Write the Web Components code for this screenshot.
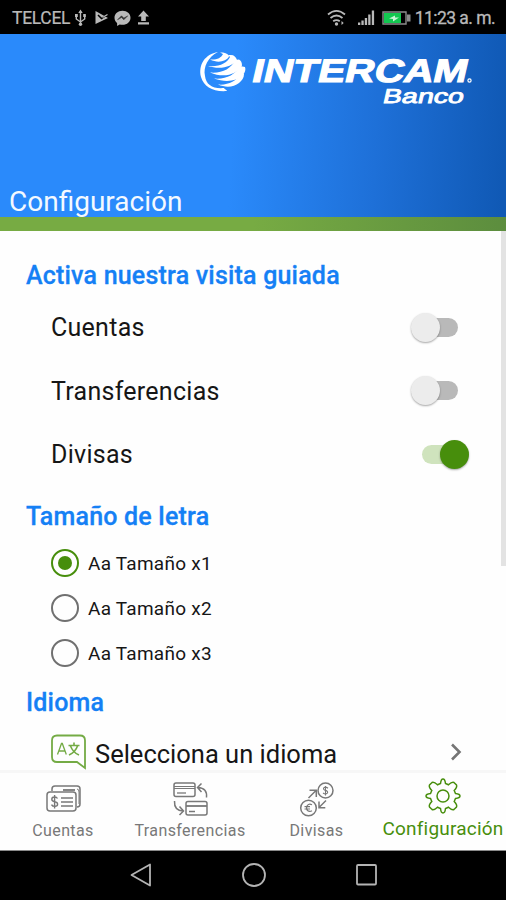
<!DOCTYPE html>
<html lang="es">
<head>
<meta charset="utf-8">
<title>Configuración</title>
<style>
  html, body {
    margin: 0;
    height: 100%;
    overflow: hidden;
    background: #fff;
    font-family: Roboto, "Liberation Sans", sans-serif;
  }
</style>
</head>
<body>
<phone-screen>
  <status-bar slot="top" carrier="TELCEL" time="11:23 a. m."></status-bar>
  <brand-header slot="top">Configuración</brand-header>

  <settings-section heading="Activa nuestra visita guiada">
    <switch-row>Cuentas</switch-row>
    <switch-row>Transferencias</switch-row>
    <switch-row checked>Divisas</switch-row>
  </settings-section>
  <settings-section heading="Tamaño de letra" style="--gap: 6px; margin-top: 14px">
    <radio-row checked>Aa Tamaño x1</radio-row>
    <radio-row>Aa Tamaño x2</radio-row>
    <radio-row>Aa Tamaño x3</radio-row>
  </settings-section>
  <settings-section heading="Idioma" style="--gap: 11px; margin-top: 11px">
    <link-row>Selecciona un idioma</link-row>
  </settings-section>

  <tab-bar slot="bottom">
    <tab-item icon="accounts" style="width: 126px">Cuentas</tab-item>
    <tab-item icon="transfers" style="width: 128px">Transferencias</tab-item>
    <tab-item icon="currency" style="width: 125px">Divisas</tab-item>
    <tab-item icon="gear" style="width: 128px" active>Configuración</tab-item>
  </tab-bar>
  <system-nav slot="bottom"></system-nav>
</phone-screen>

<script>
/* Clones the given markup into an open shadow root. */
const render = (element, html) => {
  const template = document.createElement('template');
  template.innerHTML = html;
  element.attachShadow({mode: 'open'}).appendChild(template.content.cloneNode(true));
};

/**
 * PhoneScreen
 */
customElements.define('phone-screen', class PhoneScreen extends HTMLElement {
constructor() {
  super();
  render(this, `
<style>
  :host {
    display: flex;
    flex-direction: column;
    width: 506px;
    height: 900px;
    overflow: hidden;
    background: #fefefe;
  }
  .body {
    flex: 1;
    min-height: 0;
    display: flex;
    overflow: hidden;
  }
  .content {
    flex: 1;
    padding-top: 28px;
  }
  .thumb {
    width: 5px;
    height: 335px;
    background: #e3e3e3;
  }
</style>
<slot name="top"></slot>
<div class="body">
  <div class="content"><slot></slot></div>
  <div class="thumb"></div>
</div>
<slot name="bottom"></slot>
`);
}
});

/**
 * StatusBar
 */
customElements.define('status-bar', class StatusBar extends HTMLElement {
constructor() {
  super();
  render(this, `
<style>
  :host {
    display: flex;
    align-items: center;
    justify-content: space-between;
    flex: none;
    box-sizing: border-box;
    height: 34px;
    padding: 2px 11px 0 12px;
    background: #000;
    color: #b9b9b9;
    font-size: 17.5px;
  }
  div {
    display: flex;
    align-items: center;
  }
  svg {
    display: block;
  }
  .carrier { letter-spacing: -0.3px; -webkit-text-stroke: 0.2px; }
  .time { letter-spacing: -0.55px; -webkit-text-stroke: 0.3px; }
</style>
<div>
  <span class="carrier"></span>
  <svg width="84" height="20" viewBox="0 0 84 20" fill="#b9b9b9">
    <g fill="none" stroke="#b9b9b9" stroke-width="1.4">
      <path d="M10.500 3v14M6.300 7v4l4.200 3l4.200-3V7"/>
    </g>
    <path d="M8.300 5l2.200-3.500l2.200 3.500zM5 6h2.800v3H5zM13.200 6h2.600v3h-2.600z"/>
    <circle cx="10.500" cy="16.200" r="1.700"/>
    <path d="M25.500 3L38 10L25.500 16z"/>
    <path d="M28 7l3.500 3.500L39 5.500" fill="none" stroke="#000" stroke-width="1.500"/>
    <path d="M32.500 9.500L37.500 6.500" fill="none" stroke="#b9b9b9" stroke-width="1.300"/>
    <path d="M52.500 2.800c-4.600 0-8 3-8 6.900c0 2.200 1 4 2.600 5.200V18l2.600-1.500c.9.200 1.800.3 2.800.3c4.600 0 8-3.100 8-7.100s-3.400-6.900-8-6.900z"/>
    <path d="M47.500 11.800l4-4l2.300 2.300l4-2.300l-4 4l-2.300-2.300z" fill="#333" stroke="#333" stroke-width=".5"/>
    <path d="M73.500 2.500l5.500 6h-3.200v4.500h-4.600V8.500H68zM68 14.300h11v2.200H68z"/>
  </svg>
</div>
<div>
  <svg width="88" height="20" viewBox="0 0 88 20" fill="#b9b9b9">
    <g fill="none" stroke="#b9b9b9" stroke-width="1.800">
      <path d="M1 6.500Q9.500-.8 18 6.500M3.500 10Q9.500 5 15.500 10M6.200 13.300Q9.500 10.800 12.800 13.300"/>
    </g>
    <circle cx="9.500" cy="16" r="1.700"/>
    <path d="M14.500 13l2.200 2l-2.200 2z"/>
    <path d="M31 14.500h2.300V17H31zM34.400 12.500h2.300V17h-2.300zM37.800 10h2.300v7h-2.300zM41.200 6.500h2.300V17h-2.300zM44.800 2.500h2.300V17h-2.300z"/>
    <path d="M56 4h23v12H56z" fill="none" stroke="#8c8c8c" stroke-width="1.400"/>
    <path d="M80 6.500h3.500v7H80z" fill="#8c8c8c"/>
    <path d="M57 5h17v10H57z" fill="#12c750"/>
    <path d="M62 10.500l6-3v2h4l-6 4v-2.500z" fill="#c9f5d6"/>
  </svg>
  <span class="time"></span>
</div>
`);
}

connectedCallback() {
  this.shadowRoot.querySelector('.carrier').textContent = this.getAttribute('carrier');
  this.shadowRoot.querySelector('.time').textContent = this.getAttribute('time');
}
});

/**
 * BrandHeader
 */
customElements.define('brand-header', class BrandHeader extends HTMLElement {
constructor() {
  super();
  render(this, `
<style>
  :host {
    display: flex;
    flex-direction: column;
    justify-content: space-between;
    flex: none;
    box-sizing: border-box;
    height: 197px;
    border-bottom: 14px solid;
    border-image: linear-gradient(90deg, #77ab43 50%, #5c8d3e) 1;
    background: linear-gradient(93deg, #2a8afb 46%, #1e70d8 74%, #1059b5 99%);
    color: #f4f9ff;
  }
  svg {
    align-self: flex-end;
    margin: 12px 28px 0 0;
  }
  .title {
    padding-left: 9px;
    font-size: 28px;
    line-height: 31px;
  }
</style>
<svg width="280" height="64" viewBox="0 0 280 64" fill="#fff">
  <path d="M20 6C7 8 0 19 3 31c3 10 12 15 26 14c0-1-3-2-3-3C15 43 8 39 7 30C5 21 10 11 20 6z"/>
  <path d="M12 13.500c7 .5 11-1.500 13-5.500l-3-1.500h3c4 1 6 2 6 4c-3 5-11 7-19 3z"/>
  <path d="M10 20c12 1 19-3 22-9l-2-2l3 0c3 0 5 2 6 5c-5 7-17 10-29 6z"/>
  <path d="M12 26.500c12 1 21-3.500 25-12.500l4-.5c2 1 3 3 3 6c-5 9-18 13-32 7z"/>
  <path d="M16 32.500c12 1 21-3.500 26-12.500l5 1c1 3 0 5-2 8c-6 6-17 8-29 3.500z"/>
  <path d="M20 38.500c10 1 18-3.500 23-10.500l3 0c0 4-2 6-5 9c-5 4-13 5-21 1.500z"/>
  <g font-family='"Liberation Sans", sans-serif' stroke="#fff" transform="skewX(-13)">
    <text x="61" y="36.500" font-size="32.500" font-weight="700" textLength="215" lengthAdjust="spacingAndGlyphs" stroke-width="1.100">INTERCAM</text>
    <text x="197" y="57.500" font-size="20" textLength="81" lengthAdjust="spacingAndGlyphs" stroke-width=".8">Banco</text>
  </g>
  <circle cx="271.500" cy="34.500" r="1.600" fill="none" stroke="#fff" stroke-width="1.200"/>
</svg>
<div class="title"><slot></slot></div>
`);
}
});

/**
 * SettingsSection
 */
customElements.define('settings-section', class SettingsSection extends HTMLElement {
constructor() {
  super();
  render(this, `
<style>
  :host {
    display: block;
    padding-left: 26px;
  }
  h2 {
    margin: 0;
    color: #1580f5;
    font-size: 25px;
    font-weight: 500;
    letter-spacing: 0.2px;
    line-height: 34px;
    -webkit-text-stroke: 0.3px;
  }
  .rows {
    padding: var(--gap, 2.5px) 0 0 25px;
  }
</style>
<h2></h2>
<div class="rows"><slot></slot></div>
`);
}

connectedCallback() {
  this.shadowRoot.querySelector('h2').textContent = this.getAttribute('heading');
}
});

/**
 * SwitchRow
 */
customElements.define('switch-row', class SwitchRow extends HTMLElement {
constructor() {
  super();
  render(this, `
<style>
  :host {
    display: flex;
    align-items: center;
    justify-content: space-between;
    height: 63.5px;
    padding-right: 33px;
    color: #161616;
    font-size: 25px;
    letter-spacing: 0.27px;
  }
  span { padding-top: 1px; }
  .switch {
    display: flex;
    align-items: center;
    box-sizing: border-box;
    width: 36px;
    height: 19px;
    margin-right: 10px;
    border-radius: 10px;
    background: #b9b9b9;
  }
  .knob {
    flex: none;
    width: 29px;
    height: 29px;
    margin-left: -11px;
    border-radius: 50%;
    background: #ececec;
    box-shadow: 0 1px 2px rgba(0, 0, 0, 0.35);
  }
  :host([checked]) .switch { background: #cfe3bd; }
  :host([checked]) .knob { margin-left: 17.5px; background: #478e0c; }
</style>
<span><slot></slot></span>
<div class="switch"><div class="knob"></div></div>
`);
}
});

/**
 * RadioRow
 */
customElements.define('radio-row', class RadioRow extends HTMLElement {
constructor() {
  super();
  render(this, `
<style>
  :host {
    display: flex;
    align-items: center;
    gap: 9px;
    height: 45px;
    color: #161616;
    font-size: 19px;
    letter-spacing: 0.25px;
  }
  .ring {
    display: flex;
    align-items: center;
    justify-content: center;
    box-sizing: border-box;
    width: 28px;
    height: 28px;
    border: 2.5px solid #707070;
    border-radius: 50%;
  }
  :host([checked]) .ring { border-color: #478e0c; }
  :host([checked]) .ring::after {
    content: "";
    width: 14px;
    height: 14px;
    border-radius: 50%;
    background: #478e0c;
  }
  span { padding-top: 2px; }
</style>
<div class="ring"></div>
<span><slot></slot></span>
`);
}
});

/**
 * LinkRow
 */
customElements.define('link-row', class LinkRow extends HTMLElement {
constructor() {
  super();
  render(this, `
<style>
  :host {
    display: flex;
    align-items: center;
    height: 42px;
    padding-right: 39px;
    color: #161616;
    font-size: 25.5px;
  }
  span { flex: 1; padding: 3px 0 0 8px; }
</style>
<svg width="36" height="36" viewBox="0 0 36 36" fill="none" stroke="#74ab45">
  <path d="M6 1.500h23q5 0 5 5V34l-8-6H6q-5 0-5-5V6.500q0-5 5-5z" stroke-width="1.800"/>
  <path d="M6.500 20.500l4-11h.8l4 11M8 17h6" stroke-width="1.300"/>
  <path d="M17.500 11.500h11M23 8.500v3M26.500 12q-2 6-8.500 9M19.500 12q2.500 6.500 8.500 9" stroke-width="1.600"/>
</svg>
<span><slot></slot></span>
<svg width="12" height="18" viewBox="0 0 12 18" fill="none" stroke="#757575" stroke-width="2.600">
  <path d="M2 1.500L9.500 9L2 16.500"/>
</svg>
`);
}
});

/**
 * TabBar
 */
customElements.define('tab-bar', class TabBar extends HTMLElement {
constructor() {
  super();
  render(this, `
<style>
  :host {
    position: relative;
    display: flex;
    flex: none;
    box-sizing: border-box;
    height: 81px;
    border-top: 3px solid #f7f7f7;
    border-bottom: 1px solid #8a8a8a;
    background: #fefefe;
  }
</style>
<slot></slot>
`);
}
});

const tabIcons = {
  accounts: `
    <path d="M7 10V8q0-3 3-3h22q3 0 3 3v15q0 3-3 3"/>
    <path d="M32 8q2 0 2 3v12" stroke-width="1"/>
    <rect x="2" y="11" width="29" height="19" rx="3"/>
    <path d="M18 9h12" stroke-width="1.800"/>
    <path d="M16 17h12M16 21h12M16 25h12"/>
    <path d="M12.500 17.500q-1-1.700-3.200-1.500q-2.500.2-2.500 2.300q0 2 2.800 2.400q3 .4 3 2.500q0 2-2.600 2.200q-2.500.1-3.500-1.800M9.600 14v13.500" stroke-width="1.400"/>`,
  transfers: `
    <rect x="2" y="2" width="21" height="13.500" rx="2"/>
    <path d="M2 5.500h21M2 7.500h21" stroke-width="1.200"/>
    <path d="M5 12h9" stroke-width="1.300"/>
    <rect x="14" y="20.500" width="21" height="13.500" rx="2"/>
    <path d="M14 25h21" stroke-width="1.800"/>
    <path d="M17 30.500h6"/>
    <path d="M34.500 16.500Q35.500 7 26 6.500M29.500 2.500L25.500 6.500l4 4.500M2.500 20Q2 29.500 11 30M7.500 25.500L11.500 30l-4 4"/>`,
  currency: `
    <circle cx="26.500" cy="9.500" r="7.500"/>
    <circle cx="9.500" cy="27" r="7.800"/>
    <path d="M29 7.300q-2.500-2-4.200-.5q-1 1.800 1.500 2.600q3.300.8 2 2.800q-1.800 1.600-4.300-.2M26.500 5v9.500" stroke-width="1.100"/>
    <path d="M13 23.700q-3-1.500-4.700.8q-1.600 2.800.2 5q2 1.700 4.500.3M5.500 25.700h5.500M5.500 28h5.500" stroke-width="1.200"/>
    <path d="M9.500 17L17 9.500M10.500 9.300h6.800v6.800M27 19.500L20 26.500M20 20.500v6.300h6.300"/>`,
  gear: `
    <circle cx="18" cy="18" r="6"/>
    <path d="M15.500 5.500Q16 1 18 1t2.500 4.500l3 1.300Q27 3.500 29 4.500l2.500 2.500q1 2-2.300 5.500l1.300 3Q35 16 35 18t-4.500 2.500l-1.300 3q3.300 3.500 2.300 5.500l-2.500 2.500q-2 1-5.500-2.300l-3 1.300Q20 35 18 35t-2.500-4.500l-3-1.300Q9 32.500 7 31.500L4.500 29q-1-2 2.300-5.500l-1.300-3Q1 20 1 18t4.500-2.500l1.300-3Q3.500 9 4.500 7L7 4.500q2-1 5.500 2.300z"/>`
};

/**
 * TabItem
 */
customElements.define('tab-item', class TabItem extends HTMLElement {
constructor() {
  super();
  render(this, `
<style>
  :host {
    display: flex;
    flex-direction: column;
    align-items: center;
    flex: none;
    box-sizing: border-box;
    padding-top: 8px;
    color: #787878;
    font-size: 16px;
    letter-spacing: 0.4px;
    white-space: nowrap;
  }
  :host([active]) {
    padding-top: 5px;
    color: #478e0c;
    font-size: 19px;
    letter-spacing: 0.2px;
  }
  svg {
    flex: none;
    fill: none;
    stroke: currentColor;
    stroke-width: 1.500px;
    overflow: visible;
  }
  span { line-height: 22px; margin-top: 3px; }
  :host([active]) span { line-height: 24px; }
</style>
<svg width="36" height="36" viewBox="0 0 36 36"></svg>
<span><slot></slot></span>
`);
}

connectedCallback() {
  this.shadowRoot.querySelector('svg').innerHTML = tabIcons[this.getAttribute('icon')];
}
});

/**
 * SystemNav
 */
customElements.define('system-nav', class SystemNav extends HTMLElement {
constructor() {
  super();
  render(this, `
<style>
  :host {
    display: flex;
    align-items: center;
    justify-content: center;
    gap: 88px;
    flex: none;
    box-sizing: border-box;
    height: 49px;
    padding: 0 0 1px 1px;
    background: #000;
  }
  svg {
    fill: none;
    stroke: #b4b4b4;
    stroke-width: 1.800px;
  }
</style>
<svg width="24" height="26" viewBox="0 0 24 26"><path d="M2.500 13L21 2.500v21z" stroke-linejoin="round"/></svg>
<svg width="26" height="26" viewBox="0 0 26 26"><circle cx="13" cy="13" r="11"/></svg>
<svg width="24" height="26" viewBox="0 0 24 26"><rect x="2" y="3" width="19" height="19.500" rx="1"/></svg>
`);
}
});
</script>
</body>
</html>
